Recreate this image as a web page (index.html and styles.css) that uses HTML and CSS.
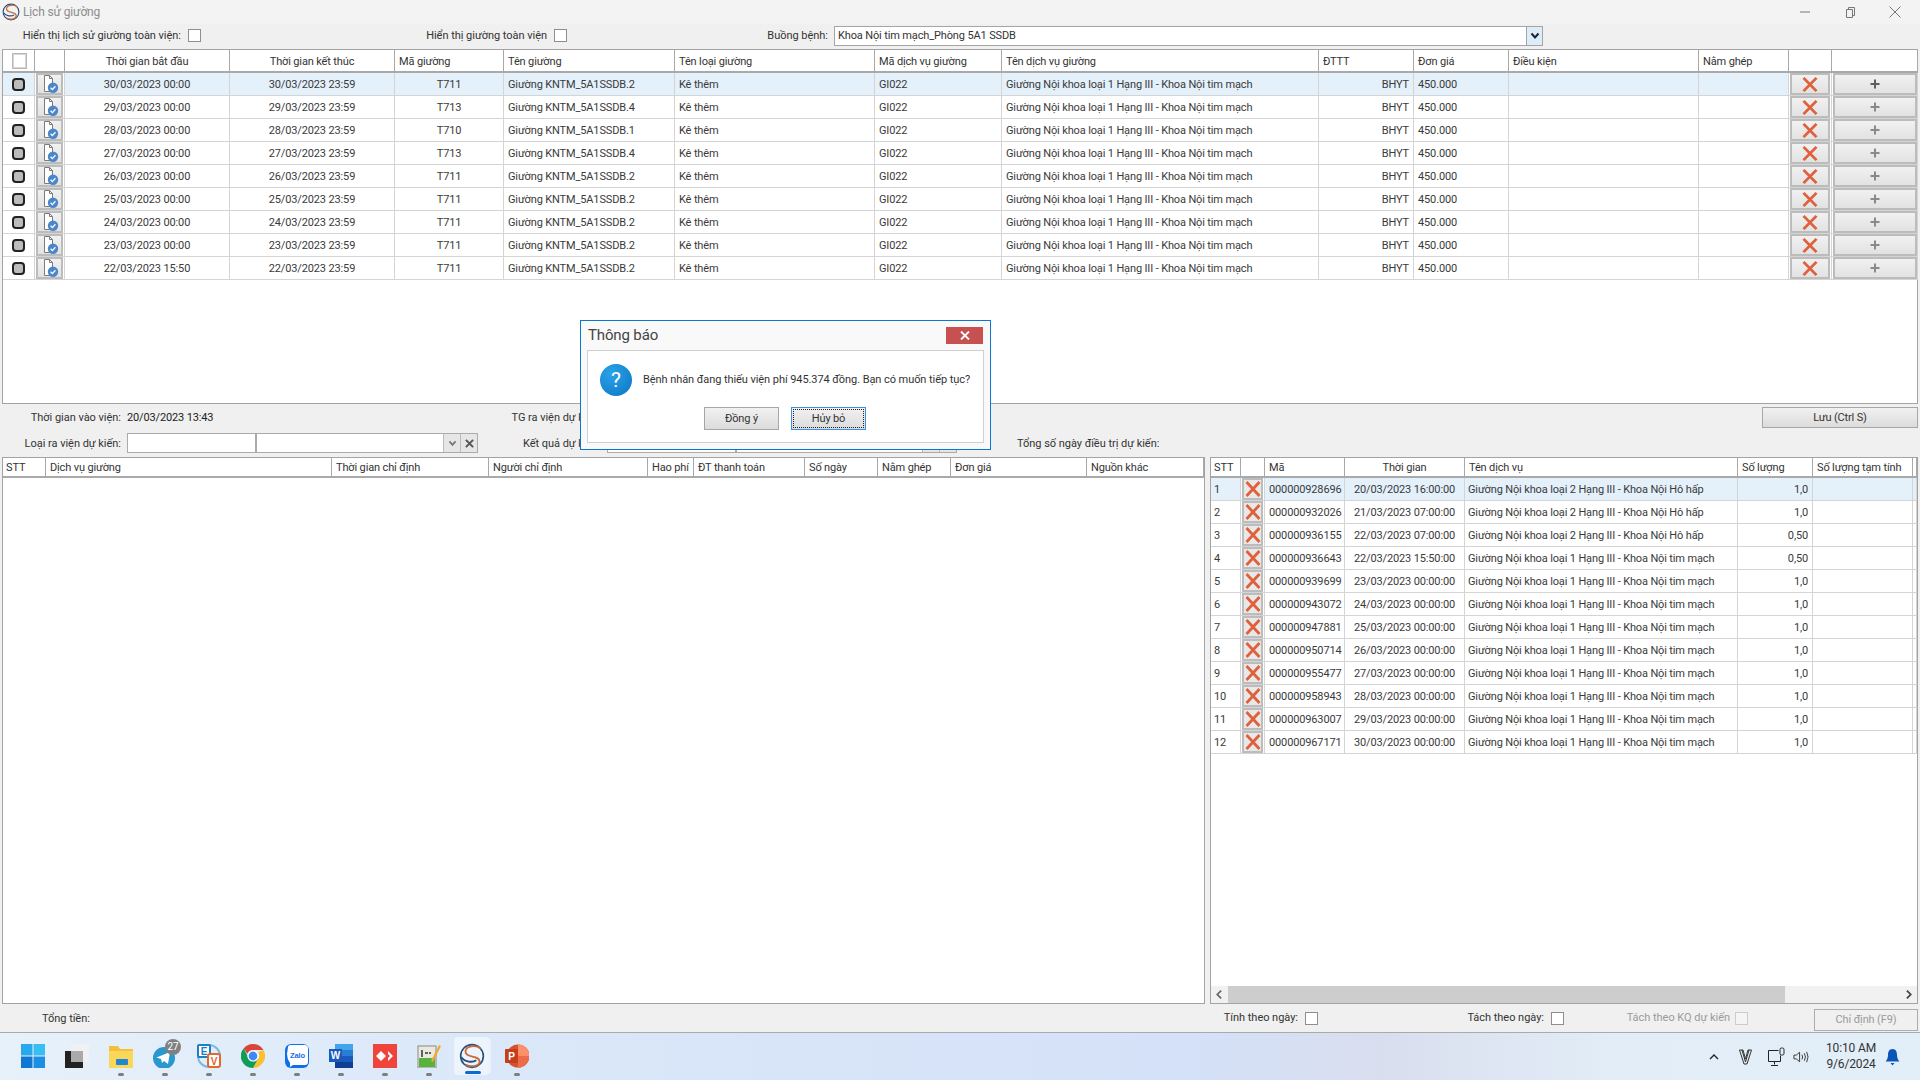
FILE: index.html
```html
<!DOCTYPE html>
<html lang="vi">
<head>
<meta charset="utf-8">
<title>Lịch sử giường</title>
<link rel="stylesheet" href="styles.css">
</head>
<body>
<svg class="defs" width="0" height="0" aria-hidden="true">
  <symbol id="doc" viewBox="0 0 28 22"><path d="M8.500 2.500h5l3 3v13h-8z" fill="#fff" stroke="#7b7b7b"/><path d="M13.500 2.500v3h3" fill="none" stroke="#7b7b7b"/><circle cx="17" cy="14.700" r="5.200" fill="#4a86c8"/><path d="M14.600 14.700l1.800 1.900 3-3.400" fill="none" stroke="#fff" stroke-width="1.300"/></symbol>
  <symbol id="x" viewBox="0 0 16 16" preserveAspectRatio="none"><path d="M1.500 1l13 14M14.500 1l-13 14" fill="none" stroke="#e0603c" stroke-width="2.800"/></symbol>
  <symbol id="plus" viewBox="0 0 10 10"><path d="M5 .5v9M.5 5h9" fill="none" stroke="currentColor" stroke-width="2"/></symbol>
  <symbol id="logo" viewBox="0 0 24 24"><circle cx="12" cy="12" r="10.500" fill="none" stroke="#24507f" stroke-width="1.500"/><path d="M20 5C15 1 6 3 6 8c0 6 13 3 13 9 0 4-7 6-13 3" fill="none" stroke="#c96a3a" stroke-width="1.700"/><path d="M2 13c3 5 11 5 14 3" fill="none" stroke="#24507f" stroke-width="1.700"/></symbol>
</svg>

<header class="titlebar">
  <svg class="title-logo"><use href="#logo"/></svg>
  <span class="title-text">Lịch sử giường</span>
  <div class="winctl">
    <svg class="ctl" viewBox="0 0 12 12"><path d="M1 6h10" stroke="#777" fill="none"/></svg>
    <svg class="ctl" viewBox="0 0 12 12"><path d="M2.500 3.500h6v8h-6zM4.500 3.500v-2h6v8h-2" stroke="#777" fill="none"/></svg>
    <svg class="ctl" viewBox="0 0 12 12"><path d="M.5.500l11 11M11.500.500l-11 11" stroke="#777" fill="none"/></svg>
  </div>
</header>

<main class="main">
  <div class="filters">
    <label class="grp g-a"><span>Hiển thị lịch sử giường toàn viện:</span><i class="chk"></i></label>
    <label class="grp g-b"><span>Hiển thị giường toàn viện</span><i class="chk"></i></label>
    <span class="lbl-room">Buồng bệnh:</span>
    <div class="select"><span class="select-text">Khoa Nội tim mạch_Phòng 5A1 SSDB</span><span class="select-btn"><svg width="10" height="8" viewBox="0 0 10 8"><path d="M1.500 1.500L5 5.500l3.500-4" fill="none" stroke="#223" stroke-width="2"/></svg></span></div>
  </div>

  <section class="grid grid-top">
    <table class="tbl">
      <colgroup><col class="t1"><col class="t2"><col class="t3"><col class="t4"><col class="t5"><col class="t6"><col class="t7"><col class="t8"><col class="t9"><col class="t10"><col class="t11"><col class="t12"><col class="t13"><col class="t14"><col class="t15"></colgroup>
      <thead><tr><th><i class="hchk"></i></th><th></th><th class="c">Thời gian bắt đầu</th><th class="c">Thời gian kết thúc</th><th>Mã giường</th><th>Tên giường</th><th>Tên loại giường</th><th>Mã dịch vụ giường</th><th>Tên dịch vụ giường</th><th>ĐTTT</th><th>Đơn giá</th><th>Điều kiện</th><th>Nằm ghép</th><th></th><th></th></tr></thead>
      <tbody>
        <tr class="sel"><td><i class="rad"></i></td><td class="b"><span class="cellbtn"><svg class="ic-doc"><use href="#doc"/></svg></span></td><td class="c">30/03/2023 00:00</td><td class="c">30/03/2023 23:59</td><td class="c">T711</td><td>Giường KNTM_5A1SSDB.2</td><td>Kê thêm</td><td>GI022</td><td>Giường Nội khoa loại 1 Hạng III - Khoa Nội tim mạch</td><td class="r">BHYT</td><td>450.000</td><td></td><td></td><td class="b"><span class="cellbtn"><svg class="ic-x"><use href="#x"/></svg></span></td><td class="b"><span class="cellbtn plus dark"><svg class="ic-plus"><use href="#plus"/></svg></span></td></tr>
        <tr><td><i class="rad"></i></td><td class="b"><span class="cellbtn"><svg class="ic-doc"><use href="#doc"/></svg></span></td><td class="c">29/03/2023 00:00</td><td class="c">29/03/2023 23:59</td><td class="c">T713</td><td>Giường KNTM_5A1SSDB.4</td><td>Kê thêm</td><td>GI022</td><td>Giường Nội khoa loại 1 Hạng III - Khoa Nội tim mạch</td><td class="r">BHYT</td><td>450.000</td><td></td><td></td><td class="b"><span class="cellbtn"><svg class="ic-x"><use href="#x"/></svg></span></td><td class="b"><span class="cellbtn plus"><svg class="ic-plus"><use href="#plus"/></svg></span></td></tr>
        <tr><td><i class="rad"></i></td><td class="b"><span class="cellbtn"><svg class="ic-doc"><use href="#doc"/></svg></span></td><td class="c">28/03/2023 00:00</td><td class="c">28/03/2023 23:59</td><td class="c">T710</td><td>Giường KNTM_5A1SSDB.1</td><td>Kê thêm</td><td>GI022</td><td>Giường Nội khoa loại 1 Hạng III - Khoa Nội tim mạch</td><td class="r">BHYT</td><td>450.000</td><td></td><td></td><td class="b"><span class="cellbtn"><svg class="ic-x"><use href="#x"/></svg></span></td><td class="b"><span class="cellbtn plus"><svg class="ic-plus"><use href="#plus"/></svg></span></td></tr>
        <tr><td><i class="rad"></i></td><td class="b"><span class="cellbtn"><svg class="ic-doc"><use href="#doc"/></svg></span></td><td class="c">27/03/2023 00:00</td><td class="c">27/03/2023 23:59</td><td class="c">T713</td><td>Giường KNTM_5A1SSDB.4</td><td>Kê thêm</td><td>GI022</td><td>Giường Nội khoa loại 1 Hạng III - Khoa Nội tim mạch</td><td class="r">BHYT</td><td>450.000</td><td></td><td></td><td class="b"><span class="cellbtn"><svg class="ic-x"><use href="#x"/></svg></span></td><td class="b"><span class="cellbtn plus"><svg class="ic-plus"><use href="#plus"/></svg></span></td></tr>
        <tr><td><i class="rad"></i></td><td class="b"><span class="cellbtn"><svg class="ic-doc"><use href="#doc"/></svg></span></td><td class="c">26/03/2023 00:00</td><td class="c">26/03/2023 23:59</td><td class="c">T711</td><td>Giường KNTM_5A1SSDB.2</td><td>Kê thêm</td><td>GI022</td><td>Giường Nội khoa loại 1 Hạng III - Khoa Nội tim mạch</td><td class="r">BHYT</td><td>450.000</td><td></td><td></td><td class="b"><span class="cellbtn"><svg class="ic-x"><use href="#x"/></svg></span></td><td class="b"><span class="cellbtn plus"><svg class="ic-plus"><use href="#plus"/></svg></span></td></tr>
        <tr><td><i class="rad"></i></td><td class="b"><span class="cellbtn"><svg class="ic-doc"><use href="#doc"/></svg></span></td><td class="c">25/03/2023 00:00</td><td class="c">25/03/2023 23:59</td><td class="c">T711</td><td>Giường KNTM_5A1SSDB.2</td><td>Kê thêm</td><td>GI022</td><td>Giường Nội khoa loại 1 Hạng III - Khoa Nội tim mạch</td><td class="r">BHYT</td><td>450.000</td><td></td><td></td><td class="b"><span class="cellbtn"><svg class="ic-x"><use href="#x"/></svg></span></td><td class="b"><span class="cellbtn plus"><svg class="ic-plus"><use href="#plus"/></svg></span></td></tr>
        <tr><td><i class="rad"></i></td><td class="b"><span class="cellbtn"><svg class="ic-doc"><use href="#doc"/></svg></span></td><td class="c">24/03/2023 00:00</td><td class="c">24/03/2023 23:59</td><td class="c">T711</td><td>Giường KNTM_5A1SSDB.2</td><td>Kê thêm</td><td>GI022</td><td>Giường Nội khoa loại 1 Hạng III - Khoa Nội tim mạch</td><td class="r">BHYT</td><td>450.000</td><td></td><td></td><td class="b"><span class="cellbtn"><svg class="ic-x"><use href="#x"/></svg></span></td><td class="b"><span class="cellbtn plus"><svg class="ic-plus"><use href="#plus"/></svg></span></td></tr>
        <tr><td><i class="rad"></i></td><td class="b"><span class="cellbtn"><svg class="ic-doc"><use href="#doc"/></svg></span></td><td class="c">23/03/2023 00:00</td><td class="c">23/03/2023 23:59</td><td class="c">T711</td><td>Giường KNTM_5A1SSDB.2</td><td>Kê thêm</td><td>GI022</td><td>Giường Nội khoa loại 1 Hạng III - Khoa Nội tim mạch</td><td class="r">BHYT</td><td>450.000</td><td></td><td></td><td class="b"><span class="cellbtn"><svg class="ic-x"><use href="#x"/></svg></span></td><td class="b"><span class="cellbtn plus"><svg class="ic-plus"><use href="#plus"/></svg></span></td></tr>
        <tr><td><i class="rad"></i></td><td class="b"><span class="cellbtn"><svg class="ic-doc"><use href="#doc"/></svg></span></td><td class="c">22/03/2023 15:50</td><td class="c">22/03/2023 23:59</td><td class="c">T711</td><td>Giường KNTM_5A1SSDB.2</td><td>Kê thêm</td><td>GI022</td><td>Giường Nội khoa loại 1 Hạng III - Khoa Nội tim mạch</td><td class="r">BHYT</td><td>450.000</td><td></td><td></td><td class="b"><span class="cellbtn"><svg class="ic-x"><use href="#x"/></svg></span></td><td class="b"><span class="cellbtn plus"><svg class="ic-plus"><use href="#plus"/></svg></span></td></tr>
      </tbody>
    </table>
  </section>

  <div class="info">
    <span class="lab">Thời gian vào viện:</span>
    <span class="val">20/03/2023 13:43</span>
    <span class="lab">TG ra viện dự kiến:</span>
    <span></span>
    <button class="btn save">Lưu (Ctrl S)</button>
    <span class="lab">Loại ra viện dự kiến:</span>
    <div class="field"><span class="f-a"></span><span class="f-b"></span><span class="f-c"><svg width="9" height="7" viewBox="0 0 10 8"><path d="M1.500 1.500L5 5.500l3.500-4" fill="none" stroke="#777" stroke-width="2"/></svg></span><span class="f-d"><svg width="9" height="9" viewBox="0 0 10 10"><path d="M1 1l8 8M9 1l-8 8" fill="none" stroke="#555" stroke-width="2.200"/></svg></span></div>
    <span class="lab">Kết quả dự kiến:</span>
    <div class="field"><span class="f-a"></span><span class="f-b"></span><span class="f-c"></span><span class="f-d"></span></div>
    <span class="total-days">Tổng số ngày điều trị dự kiến:</span>
  </div>

  <div class="grids">
    <section class="grid grid-left">
      <table class="tbl low">
        <colgroup><col class="l1"><col class="l2"><col class="l3"><col class="l4"><col class="l5"><col class="l6"><col class="l7"><col class="l8"><col class="l9"><col class="l10"></colgroup>
        <thead><tr><th>STT</th><th>Dịch vụ giường</th><th>Thời gian chỉ định</th><th>Người chỉ định</th><th>Hao phí</th><th>ĐT thanh toán</th><th>Số ngày</th><th>Nằm ghép</th><th>Đơn giá</th><th>Nguồn khác</th></tr></thead>
      </table>
    </section>
    <section class="grid grid-right">
      <div class="scroll-body">
      <table class="tbl low">
        <colgroup><col class="r1"><col class="r2"><col class="r3"><col class="r4"><col class="r5"><col class="r6"><col class="r7"><col class="r8"></colgroup>
        <thead><tr><th>STT</th><th></th><th>Mã</th><th class="c">Thời gian</th><th>Tên dịch vụ</th><th>Số lượng</th><th>Số lượng tạm tính</th><th></th></tr></thead>
        <tbody>
          <tr class="sel"><td>1</td><td class="b"><span class="cellbtn"><svg class="ic-xb"><use href="#x"/></svg></span></td><td>000000928696</td><td class="c">20/03/2023 16:00:00</td><td>Giường Nội khoa loại 2 Hạng III - Khoa Nội Hô hấp</td><td class="r">1,0</td><td></td><td></td></tr>
          <tr><td>2</td><td class="b"><span class="cellbtn"><svg class="ic-xb"><use href="#x"/></svg></span></td><td>000000932026</td><td class="c">21/03/2023 07:00:00</td><td>Giường Nội khoa loại 2 Hạng III - Khoa Nội Hô hấp</td><td class="r">1,0</td><td></td><td></td></tr>
          <tr><td>3</td><td class="b"><span class="cellbtn"><svg class="ic-xb"><use href="#x"/></svg></span></td><td>000000936155</td><td class="c">22/03/2023 07:00:00</td><td>Giường Nội khoa loại 2 Hạng III - Khoa Nội Hô hấp</td><td class="r">0,50</td><td></td><td></td></tr>
          <tr><td>4</td><td class="b"><span class="cellbtn"><svg class="ic-xb"><use href="#x"/></svg></span></td><td>000000936643</td><td class="c">22/03/2023 15:50:00</td><td>Giường Nội khoa loại 1 Hạng III - Khoa Nội tim mạch</td><td class="r">0,50</td><td></td><td></td></tr>
          <tr><td>5</td><td class="b"><span class="cellbtn"><svg class="ic-xb"><use href="#x"/></svg></span></td><td>000000939699</td><td class="c">23/03/2023 00:00:00</td><td>Giường Nội khoa loại 1 Hạng III - Khoa Nội tim mạch</td><td class="r">1,0</td><td></td><td></td></tr>
          <tr><td>6</td><td class="b"><span class="cellbtn"><svg class="ic-xb"><use href="#x"/></svg></span></td><td>000000943072</td><td class="c">24/03/2023 00:00:00</td><td>Giường Nội khoa loại 1 Hạng III - Khoa Nội tim mạch</td><td class="r">1,0</td><td></td><td></td></tr>
          <tr><td>7</td><td class="b"><span class="cellbtn"><svg class="ic-xb"><use href="#x"/></svg></span></td><td>000000947881</td><td class="c">25/03/2023 00:00:00</td><td>Giường Nội khoa loại 1 Hạng III - Khoa Nội tim mạch</td><td class="r">1,0</td><td></td><td></td></tr>
          <tr><td>8</td><td class="b"><span class="cellbtn"><svg class="ic-xb"><use href="#x"/></svg></span></td><td>000000950714</td><td class="c">26/03/2023 00:00:00</td><td>Giường Nội khoa loại 1 Hạng III - Khoa Nội tim mạch</td><td class="r">1,0</td><td></td><td></td></tr>
          <tr><td>9</td><td class="b"><span class="cellbtn"><svg class="ic-xb"><use href="#x"/></svg></span></td><td>000000955477</td><td class="c">27/03/2023 00:00:00</td><td>Giường Nội khoa loại 1 Hạng III - Khoa Nội tim mạch</td><td class="r">1,0</td><td></td><td></td></tr>
          <tr><td>10</td><td class="b"><span class="cellbtn"><svg class="ic-xb"><use href="#x"/></svg></span></td><td>000000958943</td><td class="c">28/03/2023 00:00:00</td><td>Giường Nội khoa loại 1 Hạng III - Khoa Nội tim mạch</td><td class="r">1,0</td><td></td><td></td></tr>
          <tr><td>11</td><td class="b"><span class="cellbtn"><svg class="ic-xb"><use href="#x"/></svg></span></td><td>000000963007</td><td class="c">29/03/2023 00:00:00</td><td>Giường Nội khoa loại 1 Hạng III - Khoa Nội tim mạch</td><td class="r">1,0</td><td></td><td></td></tr>
          <tr><td>12</td><td class="b"><span class="cellbtn"><svg class="ic-xb"><use href="#x"/></svg></span></td><td>000000967171</td><td class="c">30/03/2023 00:00:00</td><td>Giường Nội khoa loại 1 Hạng III - Khoa Nội tim mạch</td><td class="r">1,0</td><td></td><td></td></tr>
        </tbody>
      </table>
      </div>
      <div class="hscroll">
        <svg class="arrow" viewBox="0 0 8 10"><path d="M5.500 1.500L2 5l3.500 3.500" fill="none" stroke="#666" stroke-width="1.600"/></svg>
        <div class="track"><div class="thumb"></div></div>
        <svg class="arrow" viewBox="0 0 8 10"><path d="M2.500 1.500L6 5 2.500 8.500" fill="none" stroke="#444" stroke-width="1.600"/></svg>
      </div>
    </section>
  </div>

  <div class="bottom">
    <span class="sum">Tổng tiền:</span>
    <label class="grp g-c"><span>Tính theo ngày:</span><i class="chk"></i></label>
    <label class="grp g-d"><span>Tách theo ngày:</span><i class="chk"></i></label>
    <label class="grp g-e off"><span>Tách theo KQ dự kiến</span><i class="chk"></i></label>
    <button class="btn assign" disabled>Chỉ định (F9)</button>
  </div>
</main>

<footer class="taskbar">
  <div class="apps">
    <div class="app"><svg class="ai" viewBox="0 0 24 24"><path d="M0 0h11.500v11.500H0z" fill="#2aa8ee"/><path d="M12.500 0H24v11.500H12.500z" fill="#39bdf5"/><path d="M0 12.500h11.500V24H0z" fill="#0f79d2"/><path d="M12.500 12.500H24V24H12.500z" fill="#1a8fe3"/></svg></div>
    <div class="app"><svg class="ai" viewBox="0 0 24 24"><rect x="0" y="7" width="18" height="18" fill="#222"/><rect x="6" y="0" width="18" height="18" fill="#f1f1f1" fill-opacity=".9"/><rect x="6" y="7" width="12" height="11" fill="#aaa"/></svg></div>
    <div class="app dot"><svg class="ai" viewBox="0 0 24 24"><path d="M0 2h9l2 3h13v19H0z" fill="#f4bf3a"/><path d="M0 7h24v17H0z" fill="#fad75a"/><rect x="7" y="15" width="12" height="6" rx="1" fill="#1f86d0"/></svg></div>
    <div class="app dot"><svg class="ai" viewBox="0 0 24 24"><circle cx="11" cy="14" r="11" fill="#2a97cf"/><path d="M3.500 13.500L17 8l-2 12-4-3-2 2-1-4z" fill="#fff"/></svg><span class="badge">27</span></div>
    <div class="app dot"><svg class="ai" viewBox="0 0 24 24"><circle cx="12" cy="12" r="11" fill="none" stroke="#7db8e0" stroke-width="2"/><rect x="1" y="1" width="12" height="12" rx="1" fill="#fff" stroke="#1d7fc4" stroke-width="2"/><text class="svgt" x="7" y="11" fill="#1d7fc4" text-anchor="middle">E</text><rect x="11" y="10" width="12" height="13" rx="2" fill="#fff" stroke="#e4682c" stroke-width="2"/><text class="svgt" x="17" y="21" fill="#e4682c" text-anchor="middle">V</text></svg></div>
    <div class="app dot"><svg class="ai" viewBox="0 0 24 24"><path d="M12 0a12 12 0 0 1 10.400 6H12a6 6 0 0 0-5.600 3.800L2.600 4.400A12 12 0 0 1 12 0z" fill="#db4437"/><path d="M22.400 6A12 12 0 0 1 12 24l4.800-8.800A6 6 0 0 0 17 8z" fill="#fbc02d"/><path d="M2.600 4.400A12 12 0 0 0 12 24l4.800-8.800a6 6 0 0 1-10.400-4z" fill="#0f9d58"/><circle cx="12" cy="12" r="5" fill="#4285f4" stroke="#fff" stroke-width="1.200"/></svg></div>
    <div class="app dot"><svg class="ai" viewBox="0 0 24 24"><rect x="0" y="0" width="24" height="24" rx="6" fill="#0f6fe8"/><path d="M3 3q0-1.500 2-2h15q3 .5 3 3v14q0 3-3 3H8l-3 2 0-4Q2 15 2 10z" fill="#fff"/><text class="svgz" x="12.500" y="14" fill="#0f6fe8" text-anchor="middle">Zalo</text></svg></div>
    <div class="app dot"><svg class="ai" viewBox="0 0 24 24"><rect x="6" y="0" width="18" height="6" fill="#41a5ee"/><rect x="6" y="6" width="18" height="6" fill="#2b7cd3"/><rect x="6" y="12" width="18" height="6" fill="#185abd"/><rect x="6" y="18" width="18" height="6" fill="#103f91"/><rect x="0" y="5" width="13" height="13" fill="#185abd"/><text class="svgt" x="6.500" y="15" fill="#fff" text-anchor="middle">W</text></svg></div>
    <div class="app dot"><svg class="ai" viewBox="0 0 24 24"><rect width="24" height="24" fill="#ef443b"/><path d="M8 7l5 5-5 5-5-5zM15 7l5 5-5 5 0-3 2-2-2-2z" fill="#fff"/></svg></div>
    <div class="app dot"><svg class="ai" viewBox="0 0 24 24"><rect x="1" y="2" width="18" height="22" fill="#e9e9e0" stroke="#888"/><rect x="2" y="14" width="16" height="9" fill="#58b33c"/><path d="M5 6v7M8 9h3M12 9h2" stroke="#333" stroke-width="1.500"/><path d="M14 17L22 1l2 1-8 16z" fill="#f0a92c"/></svg></div>
    <div class="app active"><svg class="ai lg"><use href="#logo"/></svg></div>
    <div class="app dot"><svg class="ai" viewBox="0 0 24 24"><circle cx="13" cy="12" r="11.500" fill="#d35230"/><path d="M13 .5A11.500 11.500 0 0 1 24.500 12H13z" fill="#ff8f6b"/><path d="M13 12h11.500A11.500 11.500 0 0 1 13 23.500z" fill="#ed6c47"/><rect x="0" y="5" width="13" height="14" rx="1" fill="#c43e1c"/><text class="svgt" x="6.500" y="15.500" fill="#fff" text-anchor="middle">P</text></svg></div>
  </div>
  <div class="tray">
    <span class="t-cell w30"><svg width="10" height="7" viewBox="0 0 10 7"><path d="M1 6l4-4 4 4" fill="none" stroke="#222" stroke-width="1.400"/></svg></span>
    <span class="t-cell w32"><svg width="13" height="16" viewBox="0 0 13 16"><path d="M.5 1h3.500l2.500 9 2.500-9h3.500l-4.500 14h-3zM3 1l3.500 12M10 1L6.500 13" fill="none" stroke="#333"/></svg></span>
    <span class="t-cell w32"><svg width="18" height="20" viewBox="0 0 18 20"><path d="M10.500 3.500h-10v11h12v-6M6.500 14.500v3M3 18.500h7" fill="none" stroke="#222"/><rect x="12" y="1" width="4" height="7" rx="1.500" fill="none" stroke="#222"/></svg></span>
    <span class="t-cell w16"><svg width="17" height="14" viewBox="0 0 17 14"><path d="M1 5h2.500L7 2v10L3.500 9H1zM9.500 4.500q1.500 2.500 0 5M12 3q2.500 4 0 8M14.500 1.500q3 5.500 0 11" fill="none" stroke="#333"/></svg></span>
    <div class="clock"><span>10:10 AM</span><span>9/6/2024</span></div>
    <span class="t-cell w24"><svg width="15" height="18" viewBox="0 0 15 18"><path d="M7.500 1c3.500 0 4.500 3 4.500 6 0 3 1 5 2.500 6.500H.5C2 12 3 10 3 7c0-3 1-6 4.500-6zM5.500 15h4L7.500 17.500z" fill="#0a56b8"/></svg></span>
  </div>
</footer>

<div class="dialog" role="dialog">
  <div class="dlg-head"><span class="dlg-title">Thông báo</span><span class="dlg-close"><svg width="10" height="9" viewBox="0 0 10 9"><path d="M1 .5l8 8M9 .5l-8 8" stroke="#fff" stroke-width="1.800" fill="none"/></svg></span></div>
  <div class="dlg-body">
    <div class="dlg-msg"><span class="q">?</span><span>Bệnh nhân đang thiếu viện phí 945.374 đồng. Bạn có muốn tiếp tục?</span></div>
    <div class="dlg-btns"><button class="btn dlg-btn">Đồng ý</button><button class="btn dlg-btn focus"><span>Hủy bỏ</span></button></div>
  </div>
</div>
</body>
</html>
```

FILE: styles.css
```css
*{box-sizing:border-box}
html,body{margin:0;padding:0}
body{width:1920px;height:1080px;overflow:hidden;display:flex;flex-direction:column;background:#f0f0f0;font:11px/14px Roboto,"Liberation Sans",Arial,sans-serif;letter-spacing:-.14px;color:#333;position:relative}
.defs{position:absolute}
i{display:block;font-style:normal}

.titlebar{height:24px;flex:none;display:flex;align-items:center;background:#f3f3f3;padding-left:2px}
.title-logo{width:18px;height:18px}
.title-text{margin-left:3px;color:#8d8d8d;font-size:12px}
.winctl{margin-left:auto;display:flex;gap:33px;padding-right:19px}
.ctl{width:12px;height:12px}

.main{flex:1;display:flex;flex-direction:column;padding:0 2px;min-height:0}
.filters{height:25px;flex:none;display:flex;align-items:center;padding:0 0 2px 22px}
.grp,.lab,.lbl-room,.total-days,.sum{letter-spacing:-.03px}
.grp{display:flex;align-items:center;justify-content:flex-end;gap:7px;white-space:nowrap}
.chk{width:13px;height:13px;background:#fff;border:1px solid #8e8e8e;flex:none}
.g-a{width:177px}
.g-b{width:140px;margin-left:226px}
.lbl-room{width:62px;margin-left:199px;white-space:nowrap;text-align:right}
.select{width:709px;height:20px;margin-left:6px;background:#fff;border:1px solid #a5a5a5;display:flex;align-items:center;justify-content:space-between}
.select-text{padding-left:3px}
.select-btn{width:16px;height:18px;background:#dcecf9;border-left:1px solid #a5a5a5;display:flex;align-items:center;justify-content:center}

.grid{background:#fff;border:1px solid #a3a3a3}
.grid-top{height:355px;flex:none}
.tbl{table-layout:fixed;border-collapse:separate;border-spacing:0;width:100%}
.tbl th{height:23px;padding:2px 4px 0;font-weight:400;text-align:left;border-right:1px solid #a9a9a9;border-bottom:2px solid #a9a9a9;white-space:nowrap;overflow:hidden}
.tbl td{height:23px;padding:1px 4px 0;border-right:1px solid #d4d4d4;border-bottom:1px solid #d4d4d4;white-space:nowrap;overflow:hidden;color:#3a3a3a}
.tbl .c{text-align:center}
.tbl .r{text-align:right}
.tbl td.b{padding:0}
.sel td{background:#e4f0fa}
.sel td.b{background:#fff}
.low th{height:20px;border-bottom-width:2px;padding-top:1px}
.low th:first-child,.low td:first-child{padding-left:3px}

.t1{width:32px}.t2{width:30px}.t3{width:165px}.t4{width:165px}.t5{width:109px}.t6{width:171px}.t7{width:200px}.t8{width:127px}.t9{width:317px}.t10{width:95px}.t11{width:95px}.t12{width:190px}.t13{width:90px}.t14{width:43px}.t15{width:86px}

.hchk{width:15px;height:16px;margin:-2px 0 0 5px;background:#fff;border:2px solid #d9d5d5;outline:1px solid #bdb8b8;outline-offset:-1px}
.rad{width:13px;height:13px;margin-left:5px;background:#bcbcbc;border:2px solid #222;border-radius:4px}
.cellbtn{display:flex;align-items:center;justify-content:center;height:22px;margin:0 1px;background:linear-gradient(#f1f1f1,#e2e2e2);border:2px solid #bcbcbc}
.ic-doc{width:28px;height:22px;flex:none}
.ic-x{width:16px;height:15px}
.ic-xb{width:16px;height:16px;flex:none}
.ic-plus{width:10px;height:10px}
.plus{color:#8a8a8a;margin-right:0}
.plus.dark{color:#5f5f5f}

.info{height:53px;flex:none;display:grid;grid-template-columns:119px 351px 117px 350px 1fr;grid-template-rows:26px 26px;column-gap:6px;padding-top:1px;align-items:center}
.lab{text-align:right;white-space:nowrap}
.val{color:#222}
.save{justify-self:end;align-self:start;width:156px;height:21px;margin-top:2px}
.btn{font:inherit;letter-spacing:inherit;color:#333;background:linear-gradient(#f1f1f1,#dcdcdc);border:1px solid #a6a6a6;padding:0}
.field{display:flex;height:20px;align-self:start;margin-top:2px;background:#fff;border:1px solid #ababab}
.f-a{width:129px;border-right:2px solid #ababab}
.f-b{flex:1}
.f-c,.f-d{width:17px;display:flex;align-items:center;justify-content:center;background:#e6e6e6;border-left:1px solid #bcbcbc}
.total-days{padding-left:54px;white-space:nowrap}

.grids{flex:1;min-height:0;display:flex;gap:5px}
.grid-left{width:1203px}
.grid-right{flex:1;display:flex;flex-direction:column}
.l1{width:43px}.l2{width:286px}.l3{width:157px}.l4{width:159px}.l5{width:46px}.l6{width:111px}.l7{width:73px}.l8{width:73px}.l9{width:136px}.l10{width:117px}
.scroll-body{flex:1;min-height:0}
.grid-right .tbl{width:706px}
.r1{width:30px}.r2{width:24px}.r3{width:80px}.r4{width:120px}.r5{width:273px}.r6{width:75px}.r7{width:100px}.r8{width:4px}
.grid-right td.b{padding:0}
.grid-right .cellbtn{margin:0 1px;padding:0;background:#e8e8e8}
.grid-right .tbl th:nth-child(8),.grid-right .tbl td:nth-child(8){padding:0}
.grid-right td:nth-child(3){padding-right:0}
.grid-right td:nth-child(5){padding-left:3px}

.hscroll{height:17px;flex:none;display:flex;align-items:center;background:#f1f1f1}
.arrow{width:17px;height:11px;flex:none}
.track{flex:1;height:17px}
.thumb{width:557px;height:17px;background:#cdcdcd}

.bottom{height:28px;flex:none;display:flex;align-items:center}
.sum{margin-left:40px;margin-top:2px}
.g-c{width:96px;margin-left:auto}
.g-d{width:99px;margin-left:147px}
.g-e{width:121px;margin-left:63px;gap:5px;color:#9a9a9a}
.g-e .chk{border-color:#ccc;background:#f4f4f4}
.assign{width:104px;height:22px;margin-left:66px;margin-top:3px;background:#f0f0f0;color:#9a9a9a;border:1px solid #adadad}

.taskbar{height:48px;flex:none;display:flex;justify-content:space-between;border-top:1px solid #aaa;background:linear-gradient(90deg,#e7f1fa 0,#dbe8f9 25%,#d4e1f8 62%,#d9deee 72%,#e2edf7 84%,#e3eff8 100%);padding-left:11px;padding-right:16px}
.apps{display:flex;align-items:center}
.app{position:relative;width:44px;height:38px;display:flex;align-items:center;justify-content:center;margin-top:-2px}
.ai{width:24px;height:24px;display:block}
.ai.lg{width:26px;height:26px}
.app.dot::after{content:"";position:absolute;left:19px;bottom:-1px;width:6px;height:3px;border-radius:2px;background:#7e7e7e}
.app.active{width:35px;margin:-2px 6px 0 3px;border-radius:4px;background:rgba(255,255,255,.5);box-shadow:3px 0 0 -1px rgba(255,255,255,.45)}
.app.active::after{content:"";position:absolute;left:11px;bottom:1px;width:16px;height:3px;border-radius:2px;background:#0a6ccc}
.badge{position:absolute;left:22px;top:2px;width:16px;height:16px;border-radius:50%;background:#808080;color:#fff;font-size:10px;line-height:16px;text-align:center}
.svgt{font:700 10px "Liberation Sans",sans-serif}
.svgz{font:700 7.500px "Liberation Sans",sans-serif}
.tray{display:flex;align-items:center;color:#333}
.t-cell{display:flex;align-items:center;justify-content:center}
.w30{width:30px}.w32{width:32px}.w16{width:16px}.w24{width:24px}
.clock{width:58px;margin-left:13px;display:flex;flex-direction:column;align-items:center;line-height:16px;white-space:nowrap;font-size:12px;margin-top:-1px}

.dialog{position:absolute;left:580px;top:320px;width:411px;height:130px;background:#f9f9f9;border:1px solid #0a78d0;padding:6px}
.dlg-head{height:23px;display:flex;justify-content:space-between}
.dlg-title{font-size:15px;line-height:17px;color:#444;margin-left:1px}
.dlg-close{width:37px;height:17px;margin-right:1px;background:#c75050;display:flex;align-items:center;justify-content:center}
.dlg-body{height:93px;background:#fff;border:1px solid #d0d0d0;display:flex;flex-direction:column}
.dlg-msg{display:flex;align-items:center;gap:11px;height:58px;margin-bottom:-2px;padding-left:12px;white-space:nowrap;letter-spacing:-.07px}
.q{width:32px;height:32px;border-radius:50%;background:radial-gradient(circle at 35% 30%,#2aa3e8,#0c74c4);color:#fff;font-size:21px;line-height:32px;text-align:center;flex:none}
.dlg-btns{display:flex;gap:12px;padding-left:116px}
.dlg-btn{width:75px;height:23px}
.focus{border-color:#3d8fe6;padding:1px}
.focus span{display:block;height:19px;line-height:17px;border:1px dotted #222}
```
